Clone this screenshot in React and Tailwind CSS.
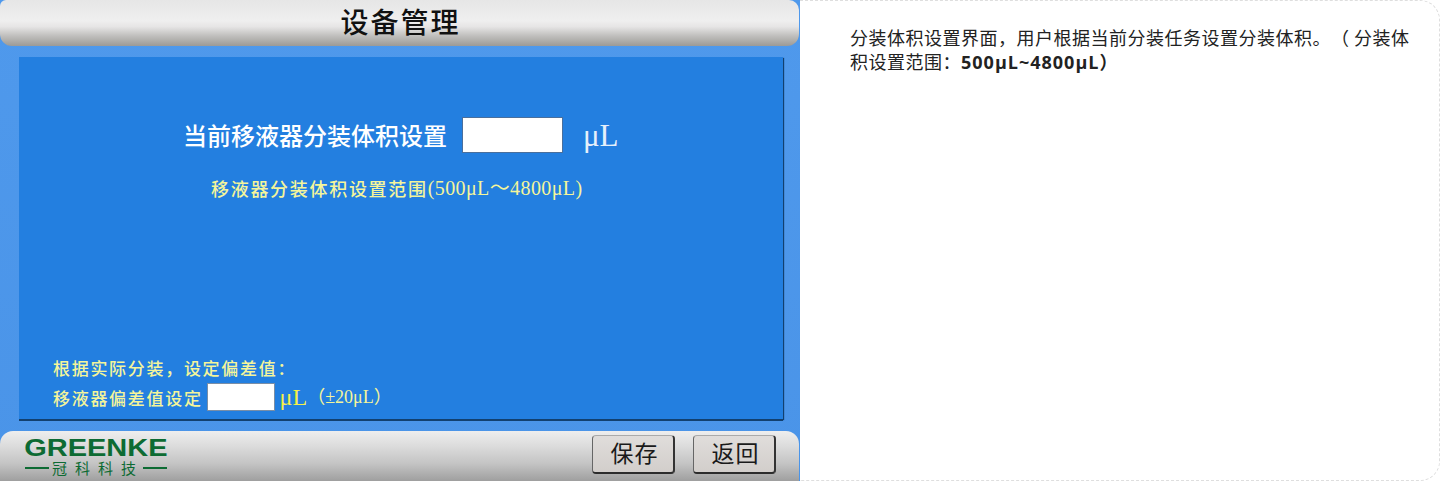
import React from 'react';

const cjk = "font-['Noto_Sans_CJK_SC','Liberation_Sans',sans-serif]";
const serif = "font-['Liberation_Serif','Noto_Sans_CJK_SC',serif]";

function PanelButton({ children }) {
  return (
    <button className={`${cjk} flex h-[39px] w-[83px] items-center justify-center rounded-[4px] border-r-2 border-b-2 border-l border-t border-r-[#333] border-b-[#2c2c2c] border-l-[#666] border-t-[#aaa] bg-gradient-to-b from-[#e0dddb] to-[#d2cecb] pb-[3px] pl-[3px] text-[23px] leading-none tracking-[1px] text-[#1a1a1a]`}>
      {children}
    </button>
  );
}

function Logo() {
  return (
    <div className="mt-[6px] flex w-[142px] flex-col text-[#0d6b33]">
      <div className="flex h-[23px] w-[142px] items-center justify-center font-['Liberation_Sans',sans-serif] text-[23px] font-bold leading-none">
        <span className="inline-block origin-center scale-x-[1.26]">GREENKE</span>
      </div>
      <div className="flex items-center gap-[3px]">
        <div className="h-[2px] flex-1 bg-[#0d6b33]" />
        <span className={`${cjk} mr-[-4px] whitespace-nowrap text-[15px] leading-none tracking-[8px]`}>冠科科技</span>
        <div className="h-[2px] flex-1 bg-[#0d6b33]" />
      </div>
    </div>
  );
}

export default function App() {
  return (
    <div className="flex h-[481px] w-[1440px] overflow-hidden bg-white">
      {/* device screen */}
      <div className="flex h-full w-[800px] shrink-0 flex-col bg-gradient-to-b from-[#4f99ec] to-[#4a94e8]">
        <div className="flex h-[46px] w-[799px] shrink-0 items-center justify-center rounded-b-[12px] rounded-tl-[6px] rounded-tr-[10px] bg-[linear-gradient(to_bottom,#e6e6e6_0%,#efefef_45%,#e6e5e5_58%,#c0bfbd_78%,#9c9a96_100%)] pb-[4px] pl-[2px]">
          <span className={`${cjk} text-[28px] font-medium leading-none tracking-[2px] text-[#111]`}>设备管理</span>
        </div>

        <div className="ml-[19px] mt-[11px] flex h-[362px] w-[764px] shrink-0 flex-col bg-[#237fe0] shadow-[0_2px_0_#12406f,1px_1px_1px_#12406f]">
          <div className="ml-[164px] mt-[60px] flex h-[36px] items-center">
            <span className={`${cjk} text-[24px] font-medium leading-none text-white`}>当前移液器分装体积设置</span>
            <div className="ml-[15px] h-[36px] w-[101px] border border-[#4a6f9c] bg-white" />
            <span className={`${serif} ml-[20px] text-[31px] leading-none text-[#e6f0fb]`}>μL</span>
          </div>
          <div className={`${cjk} ml-[192px] mt-[23px] flex h-[24px] items-center text-[18px] font-medium leading-none tracking-[1.7px] text-[#f4f59a]`}>
            移液器分装体积设置范围<span className={`${serif} text-[20px] font-normal tracking-[0.4px]`}>(500μL～4800μL)</span>
          </div>

          <div className="mb-[8px] ml-[34px] mt-auto flex flex-col">
            <div className={`${cjk} flex h-[24px] items-center text-[17px] font-medium leading-none tracking-[1.7px] text-[#f4f59a]`}>根据实际分装，设定偏差值：</div>
            <div className="mt-[4px] flex h-[28px] items-center">
              <span className={`${cjk} text-[17px] font-medium leading-none tracking-[1.7px] text-[#f4f59a]`}>移液器偏差值设定</span>
              <div className="ml-[4px] h-[28px] w-[68px] border border-[#7a8ea6] bg-white" />
              <span className={`${serif} ml-[5px] text-[24px] leading-none text-[#f6f04a]`}>μL</span>
              <span className={`${serif} text-[18px] leading-none text-[#f4f59a]`}>（±20μL）</span>
            </div>
          </div>
        </div>

        <div className="mt-[12px] flex h-[50px] w-[799px] shrink-0 items-start rounded-t-[13px] bg-[linear-gradient(to_bottom,#eeeeee_0%,#dcdcdc_30%,#c4c4c4_65%,#9f9f9f_100%)] pl-[25px] pr-[23px]">
          <Logo />
          <div className="ml-auto mt-[4px] flex gap-[18px]">
            <PanelButton>保存</PanelButton>
            <PanelButton>返回</PanelButton>
          </div>
        </div>
      </div>

      {/* description */}
      <div className="h-full flex-1 rounded-r-[20px] border-y border-r border-dashed border-[#dedede] pl-[50px] pr-[20px] pt-[24px]">
        <p className={`${cjk} text-[18px] leading-[24px] tracking-[0.5px] text-[#222] [text-spacing-trim:space-all]`}>
          分装体积设置界面，用户根据当前分装任务设置分装体积。（ 分装体积设置范围：<strong className="font-['Open_Sans','Noto_Sans_CJK_SC',sans-serif] font-bold tracking-[1px]">500μL~4800μL）</strong>
        </p>
      </div>
    </div>
  );
}
